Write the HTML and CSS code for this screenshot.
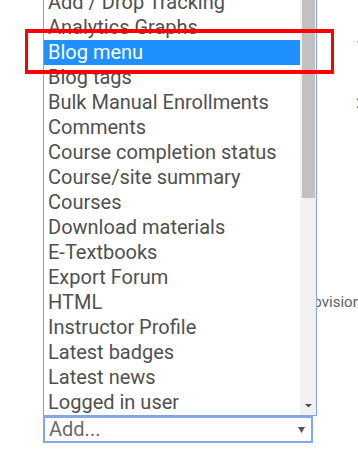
FILE: index.html
```html
<!DOCTYPE html>
<html>
<head>
<meta charset="utf-8">
<link rel="stylesheet" href="styles.css">
</head>
<body>
<div class="page">
  <div class="side">
    <div class="mark m1">1</div>
    <div class="mark m2">2</div>
    <div class="prov">provision</div>
  </div>
  <div class="add">
    <span class="add-text">Add...</span>
    <svg class="add-arrow" width="7" height="6" viewBox="0 0 7 6"><polygon points="0,0 7,0 3.5,6" fill="#555"/></svg>
  </div>

  <div class="listbox">
    <div class="options">
      <div class="opt">Add / Drop Tracking</div>
      <div class="opt">Analytics Graphs</div>
      <div class="opt selected">Blog menu</div>
      <div class="opt">Blog tags</div>
      <div class="opt">Bulk Manual Enrollments</div>
      <div class="opt">Comments</div>
      <div class="opt">Course completion status</div>
      <div class="opt">Course/site summary</div>
      <div class="opt">Courses</div>
      <div class="opt">Download materials</div>
      <div class="opt">E-Textbooks</div>
      <div class="opt">Export Forum</div>
      <div class="opt">HTML</div>
      <div class="opt">Instructor Profile</div>
      <div class="opt">Latest badges</div>
      <div class="opt">Latest news</div>
      <div class="opt">Logged in user</div>
    </div>
    <div class="scroll">
      <div class="thumb"></div>
      <div class="track-rest"></div>
      <svg class="down" width="16" height="16" viewBox="0 0 16 16"><polygon points="5,5 12,5 8.5,8.5" fill="#505050"/></svg>
    </div>
  </div>

  <div class="callout"></div>
</div>
</body>
</html>
```

FILE: styles.css
```css
html, body {
  margin: 0;
  padding: 0;
  background: #ffffff;
}

body {
  font-family: Roboto, "Liberation Sans", sans-serif;
  overflow: hidden;
}

.page {
  position: relative;
  width: 358px;
  height: 469px;
  overflow: hidden;
}

.side {
  display: flex;
  flex-direction: column;
  align-items: flex-start;
}

.mark {
  font-size: 15px;
  line-height: 20px;
  height: 20px;
  color: #777;
  margin-left: 356px;
  white-space: nowrap;
}

.m1 { margin-top: 36px; }
.m2 { margin-top: 37px; }

.prov {
  font-size: 15px;
  line-height: 20px;
  height: 20px;
  color: #5f5f5f;
  margin-left: 300px;
  margin-top: 179px;
  white-space: nowrap;
}

.add {
  margin-top: 104px;
  margin-left: 43px;
  width: 270px;
  height: 27px;
  box-sizing: border-box;
  border: 2px solid #83a7ea;
  display: flex;
  align-items: center;
  justify-content: space-between;
  padding: 0 6px 0 4px;
}

.add-text {
  font-size: 20px;
  line-height: 23px;
  color: #6a6a6a;
}

.add-arrow {
  display: block;
}

.listbox {
  position: absolute;
  left: 43px;
  top: -11px;
  width: 274px;
  height: 427px;
  box-sizing: border-box;
  border: 1px solid #86a3da;
  background: #ffffff;
  display: flex;
}

.options {
  width: 256px;
  display: flex;
  flex-direction: column;
}

.opt {
  height: 25px;
  line-height: 25px;
  font-size: 20px;
  color: #505050;
  padding-left: 4px;
  white-space: nowrap;
  overflow: hidden;
}

.opt.selected {
  background: #1e90ff;
  color: #ffffff;
}

.scroll {
  width: 16px;
  background: #f1f1f1;
  display: flex;
  flex-direction: column;
}

.thumb {
  height: 208px;
  margin: 0 1px 0 2px;
  background: #c1c1c1;
}

.track-rest {
  flex: 1;
}

.down {
  display: block;
}

.callout {
  position: absolute;
  left: 25px;
  top: 29px;
  width: 309px;
  height: 45px;
  box-sizing: border-box;
  border-style: solid;
  border-color: #ff0000;
  border-width: 4px 3px;
}
```
